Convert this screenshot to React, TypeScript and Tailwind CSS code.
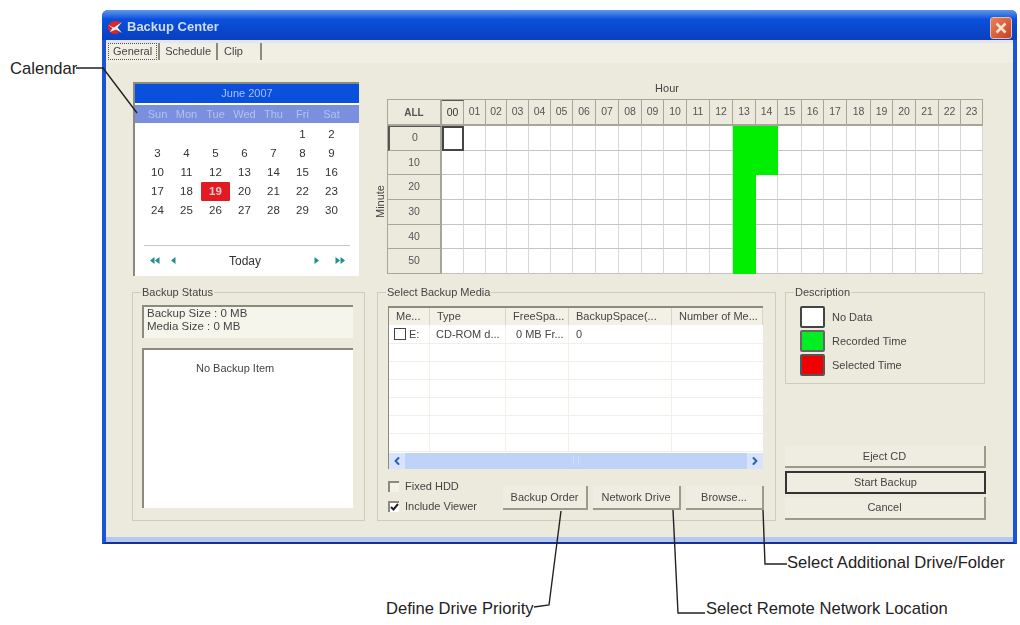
import { ChevronLeft, ChevronRight } from "lucide-react"
import type { ReactNode } from "react"

const HOURS = Array.from({ length: 24 }, (_, i) => String(i).padStart(2, "0"))
const MINUTES = ["0", "10", "20", "30", "40", "50"]
const WEEKDAYS = ["Sun", "Mon", "Tue", "Wed", "Thu", "Fri", "Sat"]
const DAYS = [
  "", "", "", "", "", "1", "2",
  "3", "4", "5", "6", "7", "8", "9",
  "10", "11", "12", "13", "14", "15", "16",
  "17", "18", "19", "20", "21", "22", "23",
  "24", "25", "26", "27", "28", "29", "30",
]
const MEDIA_COLUMNS = ["Me...", "Type", "FreeSpa...", "BackupSpace(...", "Number of Me..."]
const MEDIA_GRID = "grid grid-cols-[41px_76px_63px_103px_1fr]"
const SANS = "font-['Liberation_Sans',Arial,sans-serif]"
const CALLOUT = "absolute text-[16.6px] leading-[20px] text-[#222]"

function isRecorded(minuteIndex: number, hourIndex: number) {
  return hourIndex === 13 || (hourIndex === 14 && minuteIndex < 2)
}

function cellClass(minuteIndex: number, hourIndex: number) {
  if (isRecorded(minuteIndex, hourIndex)) return "bg-[#00ee00]"
  if (minuteIndex === 0 && hourIndex === 0) return "border-2 border-[#444] bg-white"
  return "border-r border-b border-r-[#d8d8d8] border-b-[#c4c4c4] bg-white"
}

function GroupBox({ title, className, children }: { title: string; className: string; children: ReactNode }) {
  return (
    <fieldset className={`border border-[#cfccbc] ${className}`}>
      <legend className="ml-[8px] px-px text-[11px] leading-[14px] text-[#444]">{title}</legend>
      {children}
    </fieldset>
  )
}

function RaisedButton({ label, className }: { label: string; className: string }) {
  return (
    <button
      type="button"
      className={`flex items-center justify-center border-r-2 border-b-2 border-[#9c9a8a] bg-[#efede2] text-[11px] text-[#444] ${className}`}
    >
      {label}
    </button>
  )
}

function TriangleNav({ count, dir }: { count: 1 | 2; dir: "left" | "right" }) {
  return (
    <svg width={count === 2 ? 10 : 5} height="7" viewBox={count === 2 ? "0 0 10 7" : "0 0 5 7"} fill="#1f8f8a">
      {dir === "left" ? (
        <>
          <path d="M0 3.5 4.5 0v7z" />
          {count === 2 && <path d="M5 3.5 9.5 0v7z" />}
        </>
      ) : (
        <>
          <path d="M5 3.5 .5 0v7z" />
          {count === 2 && <path d="M10 3.5 5.5 0v7z" />}
        </>
      )}
    </svg>
  )
}

function Calendar() {
  return (
    <div className="ml-px flex h-[194px] w-[226px] flex-col border-t-2 border-l-2 border-[#8c8a7c] bg-white">
      <div className="flex h-[19px] items-center justify-center bg-[#0a50dc] text-[11px] text-[#a9c0f5]">June 2007</div>
      <div className="mt-[2px] grid h-[18px] grid-cols-[repeat(7,29px)] items-center bg-[#7b8fdf] pl-[8px] text-[11px] text-[#b4c2f0]">
        {WEEKDAYS.map(day => (
          <span key={day} className="text-center">{day}</span>
        ))}
      </div>
      <div className="mt-[2px] grid grid-cols-[repeat(7,29px)] pl-[8px] text-[11.5px] leading-[19px] text-[#333]">
        {DAYS.map((day, i) => (
          <span
            key={i}
            className={`h-[19px] text-center ${day === "19" ? "rounded-[1px] bg-[#e01b24] font-bold text-[#f4c4c4]" : ""}`}
          >
            {day}
          </span>
        ))}
      </div>
      <div className="mx-[9px] mt-[25px] flex h-[29px] items-center border-t border-[#c8c8c8] pt-px">
        <span className="ml-[6px]"><TriangleNav count={2} dir="left" /></span>
        <span className="ml-[11px]"><TriangleNav count={1} dir="left" /></span>
        <span className="flex-1 text-center text-[12px] text-[#333]">Today</span>
        <span className="mr-[16px]"><TriangleNav count={1} dir="right" /></span>
        <span className="mr-[5px]"><TriangleNav count={2} dir="right" /></span>
      </div>
    </div>
  )
}

function ScheduleGrid() {
  return (
    <div className="flex">
      <div className="flex w-[28px] items-center justify-end pt-[46px] pr-[1px]">
        <span className="rotate-180 text-[11px] leading-[12px] text-[#444] [writing-mode:vertical-rl]">Minute</span>
      </div>
      <div className="flex w-[596px] flex-col">
        <div className="h-[17px] pr-[36px] text-center text-[11px] leading-[13px] text-[#444]">Hour</div>
        <div className="grid grid-cols-[54px_22px_22px_21px_22px_22px_22px_23px_23px_23px_22px_23px_23px_23px_23px_22px_24px_22px_23px_24px_22px_23px_23px_22px_22px] grid-rows-[26px_repeat(6,24.7px)] border-t border-l border-[#a8a698] text-[10.5px] text-[#555]">
          <div className="flex items-center justify-center border-r-2 border-b-2 border-[#a8a698] bg-[#ece9dd] text-[10px] font-bold">ALL</div>
          {HOURS.map((hour, i) => (
            <div
              key={hour}
              className={`flex items-center justify-center border-r border-b-2 border-[#a8a698] bg-[#ece9dd] ${i === 0 ? "border-t border-t-[#555] text-[#333]" : ""}`}
            >
              {hour}
            </div>
          ))}
          {MINUTES.map((minute, m) => (
            <div key={minute} className="contents">
              <div
                className={`flex items-center justify-center border-r-2 border-b border-[#a8a698] bg-[#ece9dd] ${m === 0 ? "border-t border-l-2 border-t-[#555] border-l-[#555]" : ""}`}
              >
                {minute}
              </div>
              {HOURS.map((hour, h) => (
                <div key={hour} className={cellClass(m, h)} />
              ))}
            </div>
          ))}
        </div>
      </div>
    </div>
  )
}

function BackupStatus() {
  return (
    <GroupBox title="Backup Status" className="h-[236px] w-[233px]">
      <div className="pr-[11px] pl-[9px]">
        <div className="mt-[6px] h-[33px] border-t-2 border-l-2 border-[#8c8a7c] bg-[#f6f5ec] pl-[3px] text-[11.5px] leading-[13px] text-[#444]">
          <p>Backup Size : 0 MB</p>
          <p>Media Size : 0 MB</p>
        </div>
        <div className="mt-[10px] h-[160px] border-t-2 border-l-2 border-[#8c8a7c] bg-white pt-[12px] pl-[52px] text-[11px] leading-[13px] text-[#444]">
          No Backup Item
        </div>
      </div>
    </GroupBox>
  )
}

function MediaList() {
  return (
    <div className="flex h-[163px] w-[375px] flex-col border-t-2 border-l border-[#8c8a7c] bg-white text-[11px] text-[#444]">
      <div className={`${MEDIA_GRID} h-[17px] items-center bg-[#f3f1e6]`}>
        {MEDIA_COLUMNS.map(col => (
          <span key={col} className="h-full truncate border-r border-[#d8d5c6] pl-[7px] leading-[17px]">{col}</span>
        ))}
      </div>
      <div className={`${MEDIA_GRID} h-[19px] items-center border-b border-[#f0efe8] leading-[18px]`}>
        <span className="flex h-full items-center gap-[3px] border-r border-[#f0efe8] pl-[5px]">
          <span className="h-[12px] w-[12px] border-[1.5px] border-[#444]" />
          E:
        </span>
        <span className="h-full border-r border-[#f0efe8] pl-[6px]">CD-ROM d...</span>
        <span className="h-full border-r border-[#f0efe8] pl-[10px]">0 MB Fr...</span>
        <span className="h-full border-r border-[#f0efe8] pl-[7px]">0</span>
        <span />
      </div>
      {[0, 1, 2, 3, 4, 5].map(row => (
        <div key={row} className={`${MEDIA_GRID} h-[18px] flex-none border-b border-[#f0efe8]`}>
          <span className="border-r border-[#f0efe8]" />
          <span className="border-r border-[#f0efe8]" />
          <span className="border-r border-[#f0efe8]" />
          <span className="border-r border-[#f0efe8]" />
          <span />
        </div>
      ))}
      <div className="mt-auto flex h-[16px] items-center justify-between bg-[#bfd3f8]">
        <span className="flex h-full w-[16px] items-center justify-center bg-[#d8e4fb] text-[#2b5fc9]">
          <ChevronLeft size={12} strokeWidth={4} />
        </span>
        <span className="h-[8px] w-[6px] border-x border-[#d4e0f9]" />
        <span className="flex h-full w-[16px] items-center justify-center bg-[#d8e4fb] text-[#2b5fc9]">
          <ChevronRight size={12} strokeWidth={4} />
        </span>
      </div>
    </div>
  )
}

function MediaBox() {
  return (
    <GroupBox title="Select Backup Media" className="h-[236px] w-[399px]">
      <div className="pl-[10px]">
        <div className="mt-[7px]"><MediaList /></div>
        <div className="mt-[7px] flex text-[11px] text-[#444]">
          <div className="flex w-[115px] flex-col">
            <label className="flex h-[20px] items-center gap-[6px]">
              <span className="h-[11px] w-[11px] border-t-2 border-l-2 border-[#8c8a7c] bg-[#f4f2e8]" />
              Fixed HDD
            </label>
            <label className="flex h-[20px] items-center gap-[6px]">
              <span className="flex h-[11px] w-[11px] items-center justify-center border-t-2 border-l-2 border-[#8c8a7c] bg-white">
                <svg width="9" height="8" viewBox="0 0 9 8" fill="none" stroke="#222" strokeWidth="2">
                  <path d="M1 4l2.5 2.5L8 1" />
                </svg>
              </span>
              Include Viewer
            </label>
          </div>
          <div className="mt-[10px] flex h-[24px] gap-[5px]">
            <RaisedButton label="Backup Order" className="w-[85px]" />
            <RaisedButton label="Network Drive" className="w-[88px]" />
            <RaisedButton label="Browse..." className="w-[78px]" />
          </div>
        </div>
      </div>
    </GroupBox>
  )
}

function Description() {
  const rows = [
    { label: "No Data", swatch: "bg-white border-[#444]" },
    { label: "Recorded Time", swatch: "bg-[#00ee22] border-[#666]" },
    { label: "Selected Time", swatch: "bg-[#f00000] border-[#555]" },
  ]
  return (
    <GroupBox title="Description" className="h-[99px] w-[200px]">
      <div className="flex flex-col gap-[2px] pt-[7px] pl-[14px]">
        {rows.map(row => (
          <div key={row.label} className="flex items-center gap-[7px] text-[11px] text-[#444]">
            <span className={`h-[22px] w-[25px] rounded-[2px] border-2 ${row.swatch}`} />
            {row.label}
          </div>
        ))}
      </div>
    </GroupBox>
  )
}

function Callouts() {
  return (
    <>
      <svg className="pointer-events-none absolute inset-0" width="1020" height="625" fill="none" stroke="#222" strokeWidth="1.4">
        <path d="M76 68H103L137 113" />
        <path d="M561 511 549 605 534 607" />
        <path d="M673 510 678 613H705" />
        <path d="M763 510 765 564H787" />
      </svg>
      <span className={`${CALLOUT} top-[59px] left-[10px]`}>Calendar</span>
      <span className={`${CALLOUT} top-[553px] left-[787px]`}>Select Additional Drive/Folder</span>
      <span className={`${CALLOUT} top-[599px] left-[386px]`}>Define Drive Priority</span>
      <span className={`${CALLOUT} top-[599px] left-[706px]`}>Select Remote Network Location</span>
    </>
  )
}

export default function App() {
  return (
    <div className={`relative h-[625px] w-[1020px] overflow-hidden bg-white pt-[10px] pl-[102px] ${SANS}`}>
      <div className="flex h-[534px] w-[915px] flex-col rounded-t-[6px] border-x-4 border-b-2 border-x-[#1a55d4] border-b-[#13319a] bg-[#ece9dd] blur-[0.35px]">
        <div className="-mx-1 flex h-[30px] flex-none items-center rounded-t-[6px] bg-gradient-to-b from-[#5f97ea] via-[#0a50dc] via-30% to-[#0a3fbe] pr-[5px] pl-[5px]">
          <svg className="mt-[5px]" width="16" height="15" viewBox="0 0 16 15">
            <path d="M8 1C4 1 1 4 1 7.5S4 14 8 14c1.500 0 3-.5 4-1.500L8 7.500l6-5C12.500 1.500 10 1 8 1z" fill="#d8262c" />
            <path d="M1 5l6 2.500L15 2l-4.500 5.500L15 13l-6-3.500L3 12l2.500-4z" fill="#f5f0e8" />
          </svg>
          <span className="ml-[4px] pt-[4px] text-[13px] font-bold text-[#cfdcf7]">Backup Center</span>
          <button
            type="button"
            className="mt-[5px] ml-auto flex h-[22px] w-[22px] items-center justify-center rounded-[3px] border border-[#e8c0a8] bg-gradient-to-br from-[#e8805a] to-[#c8401f]"
            aria-label="Close"
          >
            <svg width="12" height="12" viewBox="0 0 12 12" stroke="#f8e0d0" strokeWidth="2.6">
              <path d="M1.500 1.500 10.500 10.500M10.500 1.500 1.500 10.500" />
            </svg>
          </button>
        </div>
        <div className="flex h-[23px] flex-none items-end border-t-[3px] border-[#e4e5f0] bg-[#f1eee4] pb-[3px] text-[11px] text-[#444]">
          <span className="ml-[2px] border border-dotted border-[#555] px-[4px] leading-[15px]">General</span>
          <span className="ml-[1px] border-l-2 border-[#8c8a7c] pr-[5px] pl-[5px] leading-[17px]">Schedule</span>
          <span className="border-l-2 border-[#8c8a7c] pr-[17px] pl-[6px] leading-[17px]">Clip</span>
          <span className="h-[17px] border-l-2 border-[#8c8a7c]" />
        </div>
        <div className="flex flex-1 flex-col pt-[19px] pl-[26px]">
          <div className="flex h-[194px]">
            <Calendar />
            <ScheduleGrid />
          </div>
          <div className="mt-[9px] flex items-start gap-[12px]">
            <BackupStatus />
            <MediaBox />
            <div className="-ml-[3px] flex h-[236px] flex-col">
              <Description />
              <div className="mt-auto mb-[1px] flex flex-col gap-[3px]">
                <RaisedButton label="Eject CD" className="h-[22px] w-[201px]" />
                <RaisedButton label="Start Backup" className="h-[23px] w-[201px] border-2 border-[#333]" />
                <RaisedButton label="Cancel" className="h-[23px] w-[201px]" />
              </div>
            </div>
          </div>
        </div>
        <div className="h-[5px] flex-none bg-[#b4c8f2]" />
      </div>
      <Callouts />
    </div>
  )
}
